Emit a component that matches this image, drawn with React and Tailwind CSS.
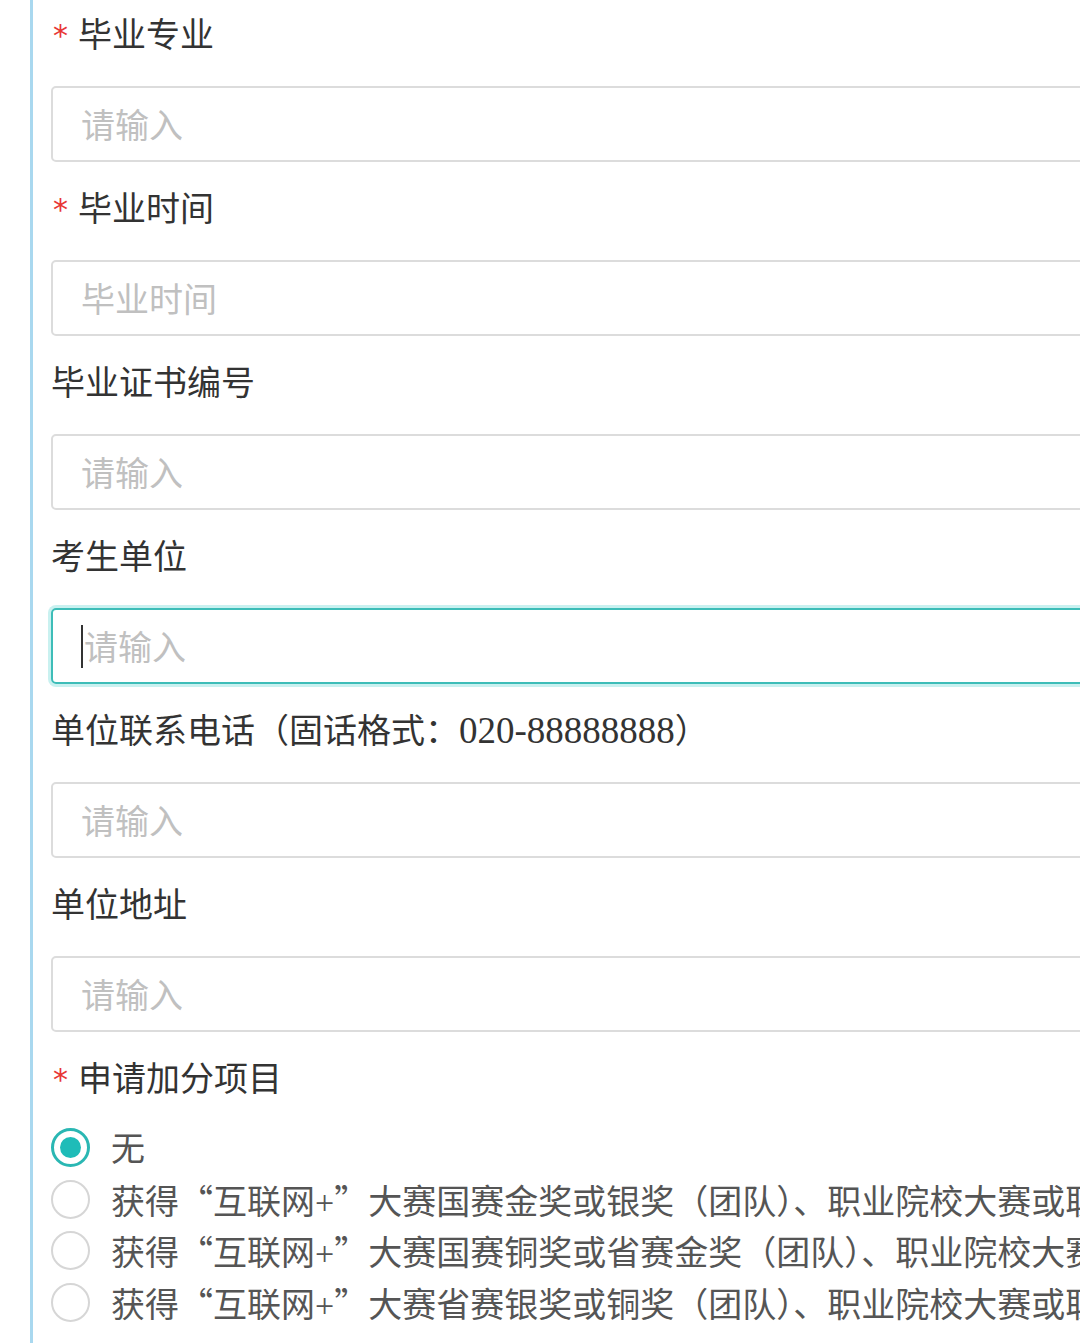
const fields = [
  { label: ['毕业专业'], required: true, placeholder: '请输入' },
  { label: ['毕业时间'], required: true, placeholder: '毕业时间' },
  { label: ['毕业证书编号'], placeholder: '请输入' },
  { label: ['考生单位'], placeholder: '请输入', focused: true },
  { label: ['单位联系电话（固话格式：', '020-88888888', '）'], placeholder: '请输入' },
  { label: ['单位地址'], placeholder: '请输入' },
]

const options = [
  ['无'],
  ['获得', '“', '互联网+', '”', '大赛国赛金奖或银奖（团队）、职业院校大赛或职业技能大赛国赛一等奖'],
  ['获得', '“', '互联网+', '”', '大赛国赛铜奖或省赛金奖（团队）、职业院校大赛或职业技能大赛国赛二等奖'],
  ['获得', '“', '互联网+', '”', '大赛省赛银奖或铜奖（团队）、职业院校大赛或职业技能大赛省赛一等奖'],
]

const cjk = { fontFamily: '"Noto Sans CJK SC", sans-serif' }

const Label = ({ text, required }) => (
  <div className="h-[60px] pt-[6px] flex items-center text-[34px] text-[#333] whitespace-nowrap">
    {required && (
      <span
        className="w-[27px] pl-[2px] text-[30px] text-[#e83636] self-start mt-[13px] leading-none"
        style={{ fontFamily: '"DejaVu Sans", sans-serif' }}
      >
        *
      </span>
    )}
    <span>
      {text.map((t, i) =>
        /^[0-9-]+$/.test(t) ? (
          <span key={i} className="text-[37px]">
            {t}
          </span>
        ) : (
          <span key={i}>{t}</span>
        )
      )}
    </span>
  </div>
)

const Field = ({ label, required, placeholder, focused }) => (
  <div className="pb-[14px]">
    <Label text={label} required={required} />
    <div
      className={
        focused
          ? 'mt-[24px] h-[76px] w-[1080px] rounded-[5px] border-2 border-[#3dbdb8] shadow-[0_0_0_3px_#c9f1f0] flex items-center pl-[28px] pt-[4px]'
          : 'mt-[24px] h-[76px] w-[1080px] rounded-[5px] border-2 border-[#dcdcdc] flex items-center pl-[28px] pt-[4px]'
      }
    >
      {focused && <span className="w-[2px] h-[43px] bg-[#333] mr-[1px] -mt-[4px]" />}
      <span className="text-[34px] text-[#c0c0c0]">{placeholder}</span>
    </div>
  </div>
)

const Radio = ({ parts, checked }) => (
  <div className="h-[51.5px] flex items-center whitespace-nowrap">
    {checked ? (
      <span className="w-[39px] h-[39px] shrink-0 rounded-full border-[3px] border-[#2ab7b3] flex items-center justify-center">
        <span className="w-[21px] h-[21px] rounded-full bg-[#1fbcb8]" />
      </span>
    ) : (
      <span className="w-[39px] h-[39px] shrink-0 rounded-full border-2 border-[#d6d6d6]" />
    )}
    <span className="ml-[21px] pt-[3px] text-[34px] text-[#555]">
      {parts.map((p, i) =>
        p === '“' || p === '”' ? (
          <span key={i} style={cjk}>
            {p}
          </span>
        ) : (
          <span key={i}>{p}</span>
        )
      )}
    </span>
  </div>
)

export default function App() {
  return (
    <div
      className="w-[1080px] h-[1343px] bg-white overflow-hidden"
      style={{ fontFamily: '"Liberation Serif", "Noto Sans CJK SC", serif' }}
    >
      <div className="ml-[30px] h-full border-l-[3px] border-[#a9d8ef] pl-[18px] pt-[2px]">
        {fields.map((f) => (
          <Field key={f.label.join('')} {...f} />
        ))}
        <Label text={['申请加分项目']} required />
        <div className="mt-[16px]">
          {options.map((o, i) => (
            <Radio key={i} parts={o} checked={i === 0} />
          ))}
        </div>
      </div>
    </div>
  )
}
